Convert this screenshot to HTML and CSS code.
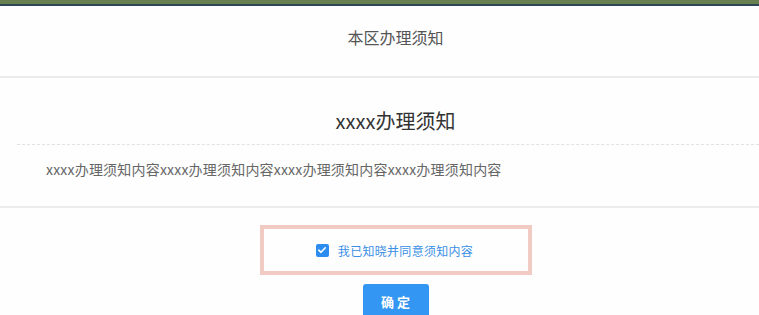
FILE: index.html
```html
<!DOCTYPE html>
<html lang="zh-CN">
<head>
    <meta charset="UTF-8">
    <meta name="viewport" content="width=device-width, initial-scale=1.0">
    <title>本区办理须知</title>
    <link rel="stylesheet" href="styles.css">
</head>
<body>

    <div class="top-bar"></div>

    <div class="page-title">本区办理须知</div>

    <div class="notice">
        <h2 class="notice-title">xxxx办理须知</h2>
        <div class="notice-body">
            <p>xxxx办理须知内容xxxx办理须知内容xxxx办理须知内容xxxx办理须知内容</p>
        </div>
    </div>

    <div class="agree-row">
        <label class="agree-box">
            <span class="check">
                <svg width="10" height="10" viewBox="0 0 10 10">
                    <path d="M1.8 5.2 L4 7.3 L8.3 2.8" fill="none" stroke="#fff" stroke-width="1.6" stroke-linecap="round" stroke-linejoin="round"/>
                </svg>
            </span>
            <span class="agree-text">我已知晓并同意须知内容</span>
        </label>
    </div>

    <div class="btn-row">
        <button class="btn-ok">确 定</button>
    </div>

</body>
</html>
```

FILE: styles.css
```css
body {
    font-family: "Noto Sans CJK SC", "Noto Sans", sans-serif;
    background-color: #fefefe;
    margin: 0;
    padding: 0;
}

.top-bar {
    height: 4px;
    background-color: #687f52;
    border-bottom: 2px solid #2e4656;
}

.page-title {
    height: 70px;
    line-height: 62px;
    text-align: center;
    padding-left: 32px;
    font-size: 16px;
    color: #555;
    border-bottom: 2px solid #ececec;
}

.notice {
    padding: 29px 0 25px 17px;
    border-bottom: 2px solid #ececec;
}

.notice-title {
    margin: 0;
    padding-left: 15px;
    text-align: center;
    font-size: 20px;
    font-weight: normal;
    line-height: 28px;
    color: #333;
    padding-bottom: 9px;
    border-bottom: 1px dashed #e2e2e2;
}

.notice-body p {
    margin: 12px 0 0 29px;
    font-size: 14px;
    line-height: 24px;
    color: #666;
    letter-spacing: 0.2px;
}

.agree-row {
    display: flex;
    justify-content: center;
    padding-left: 32px;
    margin-top: 17px;
}

.agree-box {
    width: 262px;
    height: 42px;
    border: 4px solid #f1cbc3;
    display: flex;
    align-items: center;
    justify-content: center;
    gap: 9px;
    padding-right: 2px;
    cursor: pointer;
}

.check {
    width: 13px;
    height: 13px;
    border-radius: 2px;
    background-color: #2d8cf0;
    display: flex;
    align-items: center;
    justify-content: center;
}

.agree-text {
    font-size: 12px;
    color: #3a8ee6;
    letter-spacing: 0.3px;
}

.btn-row {
    display: flex;
    justify-content: center;
    padding-left: 32px;
    margin-top: 9px;
}

.btn-ok {
    width: 66px;
    height: 34px;
    border: none;
    border-radius: 3px;
    background-color: #3396f2;
    color: #fff;
    font-family: inherit;
    font-size: 13px;
    font-weight: bold;
    cursor: pointer;
}
```
